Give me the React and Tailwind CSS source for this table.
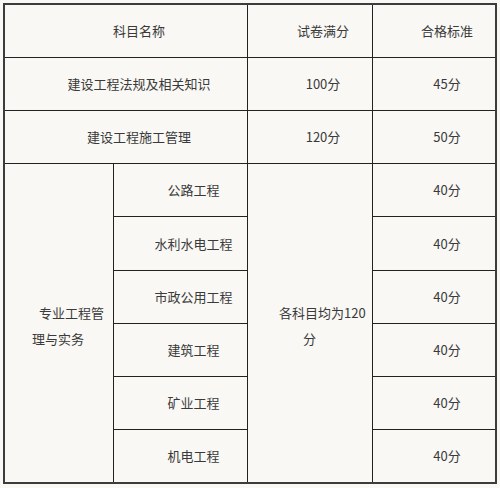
const font = { fontFamily: '"Noto Sans CJK SC", "Liberation Sans", sans-serif' };

const rows = [
  { name: '公路工程', pass: '40分', row: 'row-start-4' },
  { name: '水利水电工程', pass: '40分', row: 'row-start-5' },
  { name: '市政公用工程', pass: '40分', row: 'row-start-6' },
  { name: '建筑工程', pass: '40分', row: 'row-start-7' },
  { name: '矿业工程', pass: '40分', row: 'row-start-8' },
  { name: '机电工程', pass: '40分', row: 'row-start-9' },
];

function Cell({ className = '', children }) {
  return (
    <div className={'bg-[#f9f8f5] flex items-center justify-center pl-[26px] ' + className}>
      {children}
    </div>
  );
}

export default function App() {
  return (
    <div className="w-[500px] h-[488px] bg-[#f9f8f5] pt-[3px] pl-[3px] text-[13px] text-[#3a3a3a]" style={font}>
      <div className="w-[494px] h-[481px] border-2 border-[#3c3c3c] bg-[#222]">
        <div className="grid gap-px grid-cols-[108px_133px_124px_122px] grid-rows-[52px_52px_52px_52px_53px_52px_52px_52px_52px]">
          <Cell className="col-span-2">科目名称</Cell>
          <Cell>试卷满分</Cell>
          <Cell>合格标准</Cell>

          <Cell className="col-span-2">建设工程法规及相关知识</Cell>
          <Cell>100分</Cell>
          <Cell>45分</Cell>

          <Cell className="col-span-2">建设工程施工管理</Cell>
          <Cell>120分</Cell>
          <Cell>50分</Cell>

          <div className="bg-[#f9f8f5] row-span-6 col-start-1 row-start-4 flex flex-col justify-center pl-[27px] leading-[26px] pt-[5px]">
            <span className="ml-[7px]">专业工程管</span>
            <span>理与实务</span>
          </div>

          {rows.map((r) => (
            <Cell key={r.name} className={'col-start-2 ' + r.row}>{r.name}</Cell>
          ))}

          <div className="bg-[#f9f8f5] row-span-6 col-start-3 row-start-4 flex flex-col justify-center pl-[31px] leading-[26px] pt-[5px]">
            <span>各科目均为120</span>
            <span className="ml-[24px]">分</span>
          </div>

          {rows.map((r, i) => (
            <Cell key={'p' + i} className={'col-start-4 ' + r.row}>{r.pass}</Cell>
          ))}
        </div>
      </div>
    </div>
  );
}
